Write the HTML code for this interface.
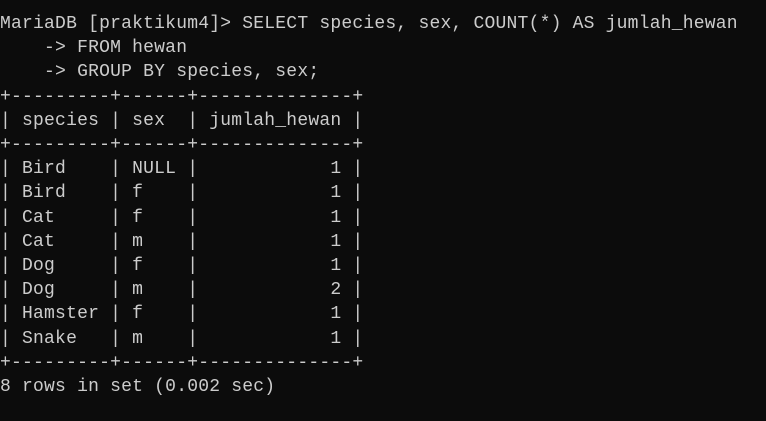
<!DOCTYPE html>
<html><head><style>
html,body{margin:0;padding:0;background:#0c0c0c;width:766px;height:421px;overflow:hidden}
pre{margin:0;position:absolute;left:0;top:12px;font-family:"Liberation Mono",monospace;font-size:18px;line-height:24.2px;color:#cccccc;letter-spacing:0.21px}
</style></head><body><pre>MariaDB [praktikum4]&gt; SELECT species, sex, COUNT(*) AS jumlah_hewan
    -&gt; FROM hewan
    -&gt; GROUP BY species, sex;
+---------+------+--------------+
| species | sex  | jumlah_hewan |
+---------+------+--------------+
| Bird    | NULL |            1 |
| Bird    | f    |            1 |
| Cat     | f    |            1 |
| Cat     | m    |            1 |
| Dog     | f    |            1 |
| Dog     | m    |            2 |
| Hamster | f    |            1 |
| Snake   | m    |            1 |
+---------+------+--------------+
8 rows in set (0.002 sec)
</pre></body></html>
